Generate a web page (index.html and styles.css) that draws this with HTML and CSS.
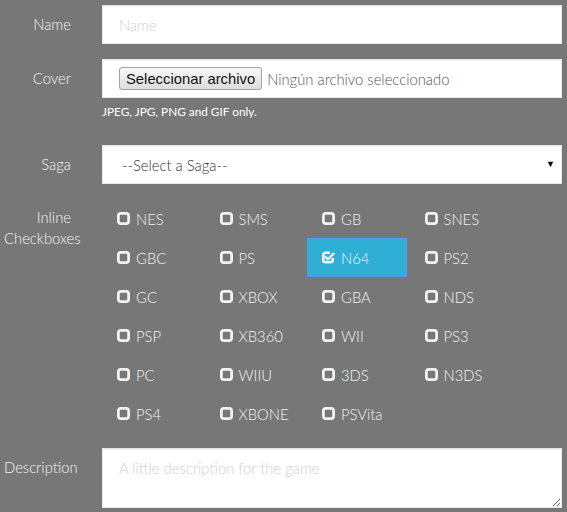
FILE: index.html
```html
<!DOCTYPE html>
<html>
<head>
<meta charset="utf-8">
<link rel="stylesheet" href="styles.css">
</head>
<body>
<form class="form">
  <div class="row">
    <label class="lbl">Name</label>
    <div class="ctl"><input class="field" type="text" placeholder="Name"></div>
  </div>
  <div class="row">
    <label class="lbl">Cover</label>
    <div class="ctl">
      <div class="field file"><button type="button" class="filebtn">Seleccionar archivo</button><span class="filetxt">Ningún archivo seleccionado</span></div>
      <p class="help">JPEG, JPG, PNG and GIF only.</p>
    </div>
  </div>
  <div class="row">
    <label class="lbl">Saga</label>
    <div class="ctl">
      <div class="field select"><span>--Select a Saga--</span><span class="arrow">▼</span></div>
    </div>
  </div>
  <div class="row">
    <label class="lbl top">Inline Checkboxes</label>
    <div class="ctl">
      <div class="checks">
        <div class="chk"><svg class="ic" viewBox="0 0 12 12"><rect x="1.25" y="1.25" width="9.5" height="9.5" rx="2.2"/></svg>NES</div>
        <div class="chk"><svg class="ic" viewBox="0 0 12 12"><rect x="1.25" y="1.25" width="9.5" height="9.5" rx="2.2"/></svg>SMS</div>
        <div class="chk"><svg class="ic" viewBox="0 0 12 12"><rect x="1.25" y="1.25" width="9.5" height="9.5" rx="2.2"/></svg>GB</div>
        <div class="chk"><svg class="ic" viewBox="0 0 12 12"><rect x="1.25" y="1.25" width="9.5" height="9.5" rx="2.2"/></svg>SNES</div>
        <div class="chk"><svg class="ic" viewBox="0 0 12 12"><rect x="1.25" y="1.25" width="9.5" height="9.5" rx="2.2"/></svg>GBC</div>
        <div class="chk"><svg class="ic" viewBox="0 0 12 12"><rect x="1.25" y="1.25" width="9.5" height="9.5" rx="2.2"/></svg>PS</div>
        <div class="chk on"><svg class="ic" viewBox="0 0 13 12"><path d="M10.75 6.5v2.05a2.2 2.2 0 0 1-2.2 2.2h-5.1a2.2 2.2 0 0 1-2.2-2.2v-5.1a2.2 2.2 0 0 1 2.2-2.2h4.6"/><path class="tick" d="M3.6 5.6l2.3 2.3 5.6-5.6"/></svg>N64</div>
        <div class="chk"><svg class="ic" viewBox="0 0 12 12"><rect x="1.25" y="1.25" width="9.5" height="9.5" rx="2.2"/></svg>PS2</div>
        <div class="chk"><svg class="ic" viewBox="0 0 12 12"><rect x="1.25" y="1.25" width="9.5" height="9.5" rx="2.2"/></svg>GC</div>
        <div class="chk"><svg class="ic" viewBox="0 0 12 12"><rect x="1.25" y="1.25" width="9.5" height="9.5" rx="2.2"/></svg>XBOX</div>
        <div class="chk"><svg class="ic" viewBox="0 0 12 12"><rect x="1.25" y="1.25" width="9.5" height="9.5" rx="2.2"/></svg>GBA</div>
        <div class="chk"><svg class="ic" viewBox="0 0 12 12"><rect x="1.25" y="1.25" width="9.5" height="9.5" rx="2.2"/></svg>NDS</div>
        <div class="chk"><svg class="ic" viewBox="0 0 12 12"><rect x="1.25" y="1.25" width="9.5" height="9.5" rx="2.2"/></svg>PSP</div>
        <div class="chk"><svg class="ic" viewBox="0 0 12 12"><rect x="1.25" y="1.25" width="9.5" height="9.5" rx="2.2"/></svg>XB360</div>
        <div class="chk"><svg class="ic" viewBox="0 0 12 12"><rect x="1.25" y="1.25" width="9.5" height="9.5" rx="2.2"/></svg>WII</div>
        <div class="chk"><svg class="ic" viewBox="0 0 12 12"><rect x="1.25" y="1.25" width="9.5" height="9.5" rx="2.2"/></svg>PS3</div>
        <div class="chk"><svg class="ic" viewBox="0 0 12 12"><rect x="1.25" y="1.25" width="9.5" height="9.5" rx="2.2"/></svg>PC</div>
        <div class="chk"><svg class="ic" viewBox="0 0 12 12"><rect x="1.25" y="1.25" width="9.5" height="9.5" rx="2.2"/></svg>WIIU</div>
        <div class="chk"><svg class="ic" viewBox="0 0 12 12"><rect x="1.25" y="1.25" width="9.5" height="9.5" rx="2.2"/></svg>3DS</div>
        <div class="chk"><svg class="ic" viewBox="0 0 12 12"><rect x="1.25" y="1.25" width="9.5" height="9.5" rx="2.2"/></svg>N3DS</div>
        <div class="chk"><svg class="ic" viewBox="0 0 12 12"><rect x="1.25" y="1.25" width="9.5" height="9.5" rx="2.2"/></svg>PS4</div>
        <div class="chk"><svg class="ic" viewBox="0 0 12 12"><rect x="1.25" y="1.25" width="9.5" height="9.5" rx="2.2"/></svg>XBONE</div>
        <div class="chk"><svg class="ic" viewBox="0 0 12 12"><rect x="1.25" y="1.25" width="9.5" height="9.5" rx="2.2"/></svg>PSVita</div>
      </div>
    </div>
  </div>
  <div class="row">
    <label class="lbl desc">Description</label>
    <div class="ctl"><textarea class="field area" placeholder="A little description for the game"></textarea></div>
  </div>
</form>
</body>
</html>
```

FILE: styles.css
```css
html, body {
  margin: 0;
  background: #777777;
}
body {
  padding: 5px 5px 0 4px;
  font-family: Lato, "Open Sans", sans-serif;
  font-weight: 300;
  font-size: 14.8px;
  color: #f2f2f2;
}
.form {
  display: flex;
  flex-direction: column;
  gap: 15px;
}
.row {
  display: flex;
  gap: 31px;
}
.lbl {
  width: 67px;
  flex: none;
  text-align: right;
  line-height: 39px;
  color: #f4f4f4;
}
.lbl.top {
  line-height: 21px;
  padding-top: 8px;
}
.lbl.desc {
  line-height: 21px;
  padding-top: 9px;
}
.ctl {
  width: 460px;
  flex: none;
}
.field {
  box-sizing: border-box;
  display: block;
  width: 460px;
  height: 39px;
  margin: 0;
  border: 1px solid #eaeaea;
  border-top-color: #e6e6e6;
  background: #ffffff;
  box-shadow: inset 0 1px 1px rgba(0,0,0,0.06);
  font-family: Lato, "Open Sans", sans-serif;
  font-weight: 300;
  font-size: 14.8px;
  color: #555555;
  padding: 0 16px;
  outline: none;
}
.field::placeholder {
  color: #cfcfcf;
}
.file {
  display: flex;
  align-items: center;
}
.filebtn {
  box-sizing: border-box;
  height: 23px;
  padding: 0 6px;
  margin: 0 5px 0 0;
  font-family: "Liberation Sans", Arial, sans-serif;
  font-weight: 400;
  font-size: 14.8px;
  color: #111;
  background: linear-gradient(#f8f8f8, #dddddd);
  border: 1px solid #a3a3a3;
  border-radius: 3px;
}
.filetxt {
  color: #555555;
}
.help {
  margin: 5px 0 0 0;
  font-size: 11.8px;
  font-weight: 400;
  line-height: 18px;
  color: #ffffff;
  padding-bottom: 9px;
}
.select {
  position: relative;
  display: flex;
  align-items: center;
  padding-left: 19px;
  color: #333333;
}
.arrow {
  position: absolute;
  right: 6px;
  top: 13px;
  font-size: 9px;
  color: #000;
  font-family: "DejaVu Sans", sans-serif;
}
.checks {
  display: grid;
  grid-template-columns: repeat(4, 100px);
  column-gap: 2.5px;
  grid-auto-rows: 39px;
}
.chk {
  box-sizing: border-box;
  display: flex;
  align-items: center;
  border: 1px solid transparent;
  padding-left: 14px;
  color: #f2f2f2;
  gap: 6px;
}
.chk.on {
  background: #2fafd6;
  border-color: #4f9fe6;
}
.ic {
  width: 13px;
  height: 13px;
  flex: none;
  fill: none;
  stroke: #f2f2f2;
  stroke-width: 2.6;
}
.ic .tick {
  stroke-width: 2.3;
  stroke-linecap: square;
}
.area {
  height: 60px;
  padding: 9px 16px;
  resize: vertical;
  line-height: 21px;
}
```
